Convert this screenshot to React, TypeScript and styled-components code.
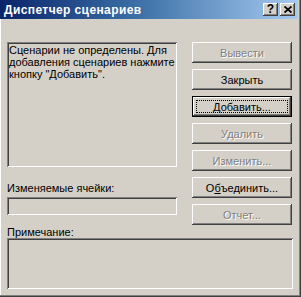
import React from "react";
import styled, { createGlobalStyle } from "styled-components";

const GlobalStyle = createGlobalStyle`
  html, body {
    margin: 0;
    padding: 0;
    background: #d4d0c8;
  }
  body {
    font-family: Tahoma, "Liberation Sans", Arial, sans-serif;
    font-size: 11px;
  }
`;

const FACE = "#d4d0c8";

const raised = `
  box-shadow: inset -1px -1px #404040, inset 1px 1px #ffffff,
    inset -2px -2px #808080, inset 2px 2px ${FACE};
`;

const sunken = `
  box-shadow: inset 1px 1px #808080, inset -1px -1px #ffffff,
    inset 2px 2px #404040, inset -2px -2px ${FACE};
`;

const Frame = styled.div`
  display: flex;
  flex-direction: column;
  box-sizing: border-box;
  width: 301px;
  height: 297px;
  background: ${FACE};
  box-shadow: inset -1px -1px #404040, inset -2px -2px #808080,
    inset 1px 0 #ffffff;
  color: #000;
`;

const TitleBar = styled.div`
  display: flex;
  align-items: center;
  height: 19px;
  margin-right: 3px;
  padding: 0 3px 0 4px;
  background: linear-gradient(90deg, #0a246a 0%, #3a6ea5 45%, #a6caf0 100%);
`;

const TitleText = styled.div`
  flex: 1;
  color: #fff;
  font-family: Tahoma, "Liberation Sans", Arial, sans-serif;
  font-weight: bold;
  font-size: 12px;
  letter-spacing: 0.4px;
  white-space: nowrap;
`;

const CaptionButton = styled.div`
  display: flex;
  align-items: center;
  justify-content: center;
  box-sizing: border-box;
  width: 15px;
  height: 13px;
  margin-left: 2px;
  background: ${FACE};
  ${raised}
  font-family: "Liberation Sans", Arial, sans-serif;
  font-weight: bold;
  font-size: 12px;
  line-height: 13px;
  color: #000;
`;

const Body = styled.div`
  display: flex;
  flex-direction: column;
  padding: 23px 8px 0 7px;
`;

const TopRow = styled.div`
  display: flex;
  gap: 15px;
`;

const LeftCol = styled.div`
  display: flex;
  flex-direction: column;
  width: 170px;
`;

const Well = styled.div<{ $h: number }>`
  box-sizing: border-box;
  height: ${(p) => p.$h}px;
  padding: 2px 2px;
  background: ${FACE};
  ${sunken}
  font-family: Tahoma, "Liberation Sans", Arial, sans-serif;
  font-size: 11px;
  line-height: 12px;
`;

const FieldLabel = styled.div<{ $mt: number; $lh: number }>`
  margin-top: ${(p) => p.$mt}px;
  font-family: Tahoma, "Liberation Sans", Arial, sans-serif;
  font-size: 11px;
  line-height: ${(p) => p.$lh}px;
  white-space: nowrap;
`;

const ButtonCol = styled.div`
  display: flex;
  flex-direction: column;
  gap: 6px;
  width: 100px;
`;

const Button = styled.div<{ $disabled?: boolean; $default?: boolean }>`
  position: relative;
  display: flex;
  align-items: center;
  justify-content: center;
  box-sizing: border-box;
  height: 21px;
  background: ${FACE};
  font-family: Tahoma, "Liberation Sans", Arial, sans-serif;
  font-size: 11px;
  color: ${(p) => (p.$disabled ? "#808080" : "#000")};
  text-shadow: ${(p) => (p.$disabled ? "1px 1px #ffffff" : "none")};
  ${(p) =>
    p.$default
      ? `box-shadow: inset 0 0 0 1px #000000, inset -2px -2px #404040,
          inset 2px 2px #ffffff, inset -3px -3px #808080;`
      : raised}

  &::after {
    content: "";
    display: ${(p) => (p.$default ? "block" : "none")};
    position: absolute;
    inset: 4px;
    border: 1px dotted #000;
  }
`;

const CloseGlyph = () => (
  <svg width="8" height="7" viewBox="0 0 8 7">
    <path d="M0.5 0.5 L7.5 6.5 M7.5 0.5 L0.5 6.5" stroke="#000" strokeWidth="1.8" />
  </svg>
);

export default function App() {
  return (
    <>
      <GlobalStyle />
      <Frame>
        <TitleBar>
          <TitleText>Диспетчер сценариев</TitleText>
          <CaptionButton>?</CaptionButton>
          <CaptionButton>
            <CloseGlyph />
          </CaptionButton>
        </TitleBar>
        <Body>
          <TopRow>
            <LeftCol>
              <Well $h={125}>
                Сценарии не определены. Для добавления сценариев нажмите
                кнопку "Добавить".
              </Well>
              <FieldLabel $mt={15} $lh={13}>
                Изменяемые ячейки:
              </FieldLabel>
              <Well $h={18} style={{ marginTop: 2 }} />
            </LeftCol>
            <ButtonCol>
              <Button $disabled>Вывести</Button>
              <Button>Закрыть</Button>
              <Button $default>Добавить...</Button>
              <Button $disabled>Удалить</Button>
              <Button $disabled>Изменить...</Button>
              <Button>
                О<u>б</u>ъединить...
              </Button>
              <Button $disabled>Отчет...</Button>
            </ButtonCol>
          </TopRow>
          <FieldLabel $mt={2} $lh={11}>
            Примечание:
          </FieldLabel>
          <Well $h={51} />
        </Body>
      </Frame>
    </>
  );
}
